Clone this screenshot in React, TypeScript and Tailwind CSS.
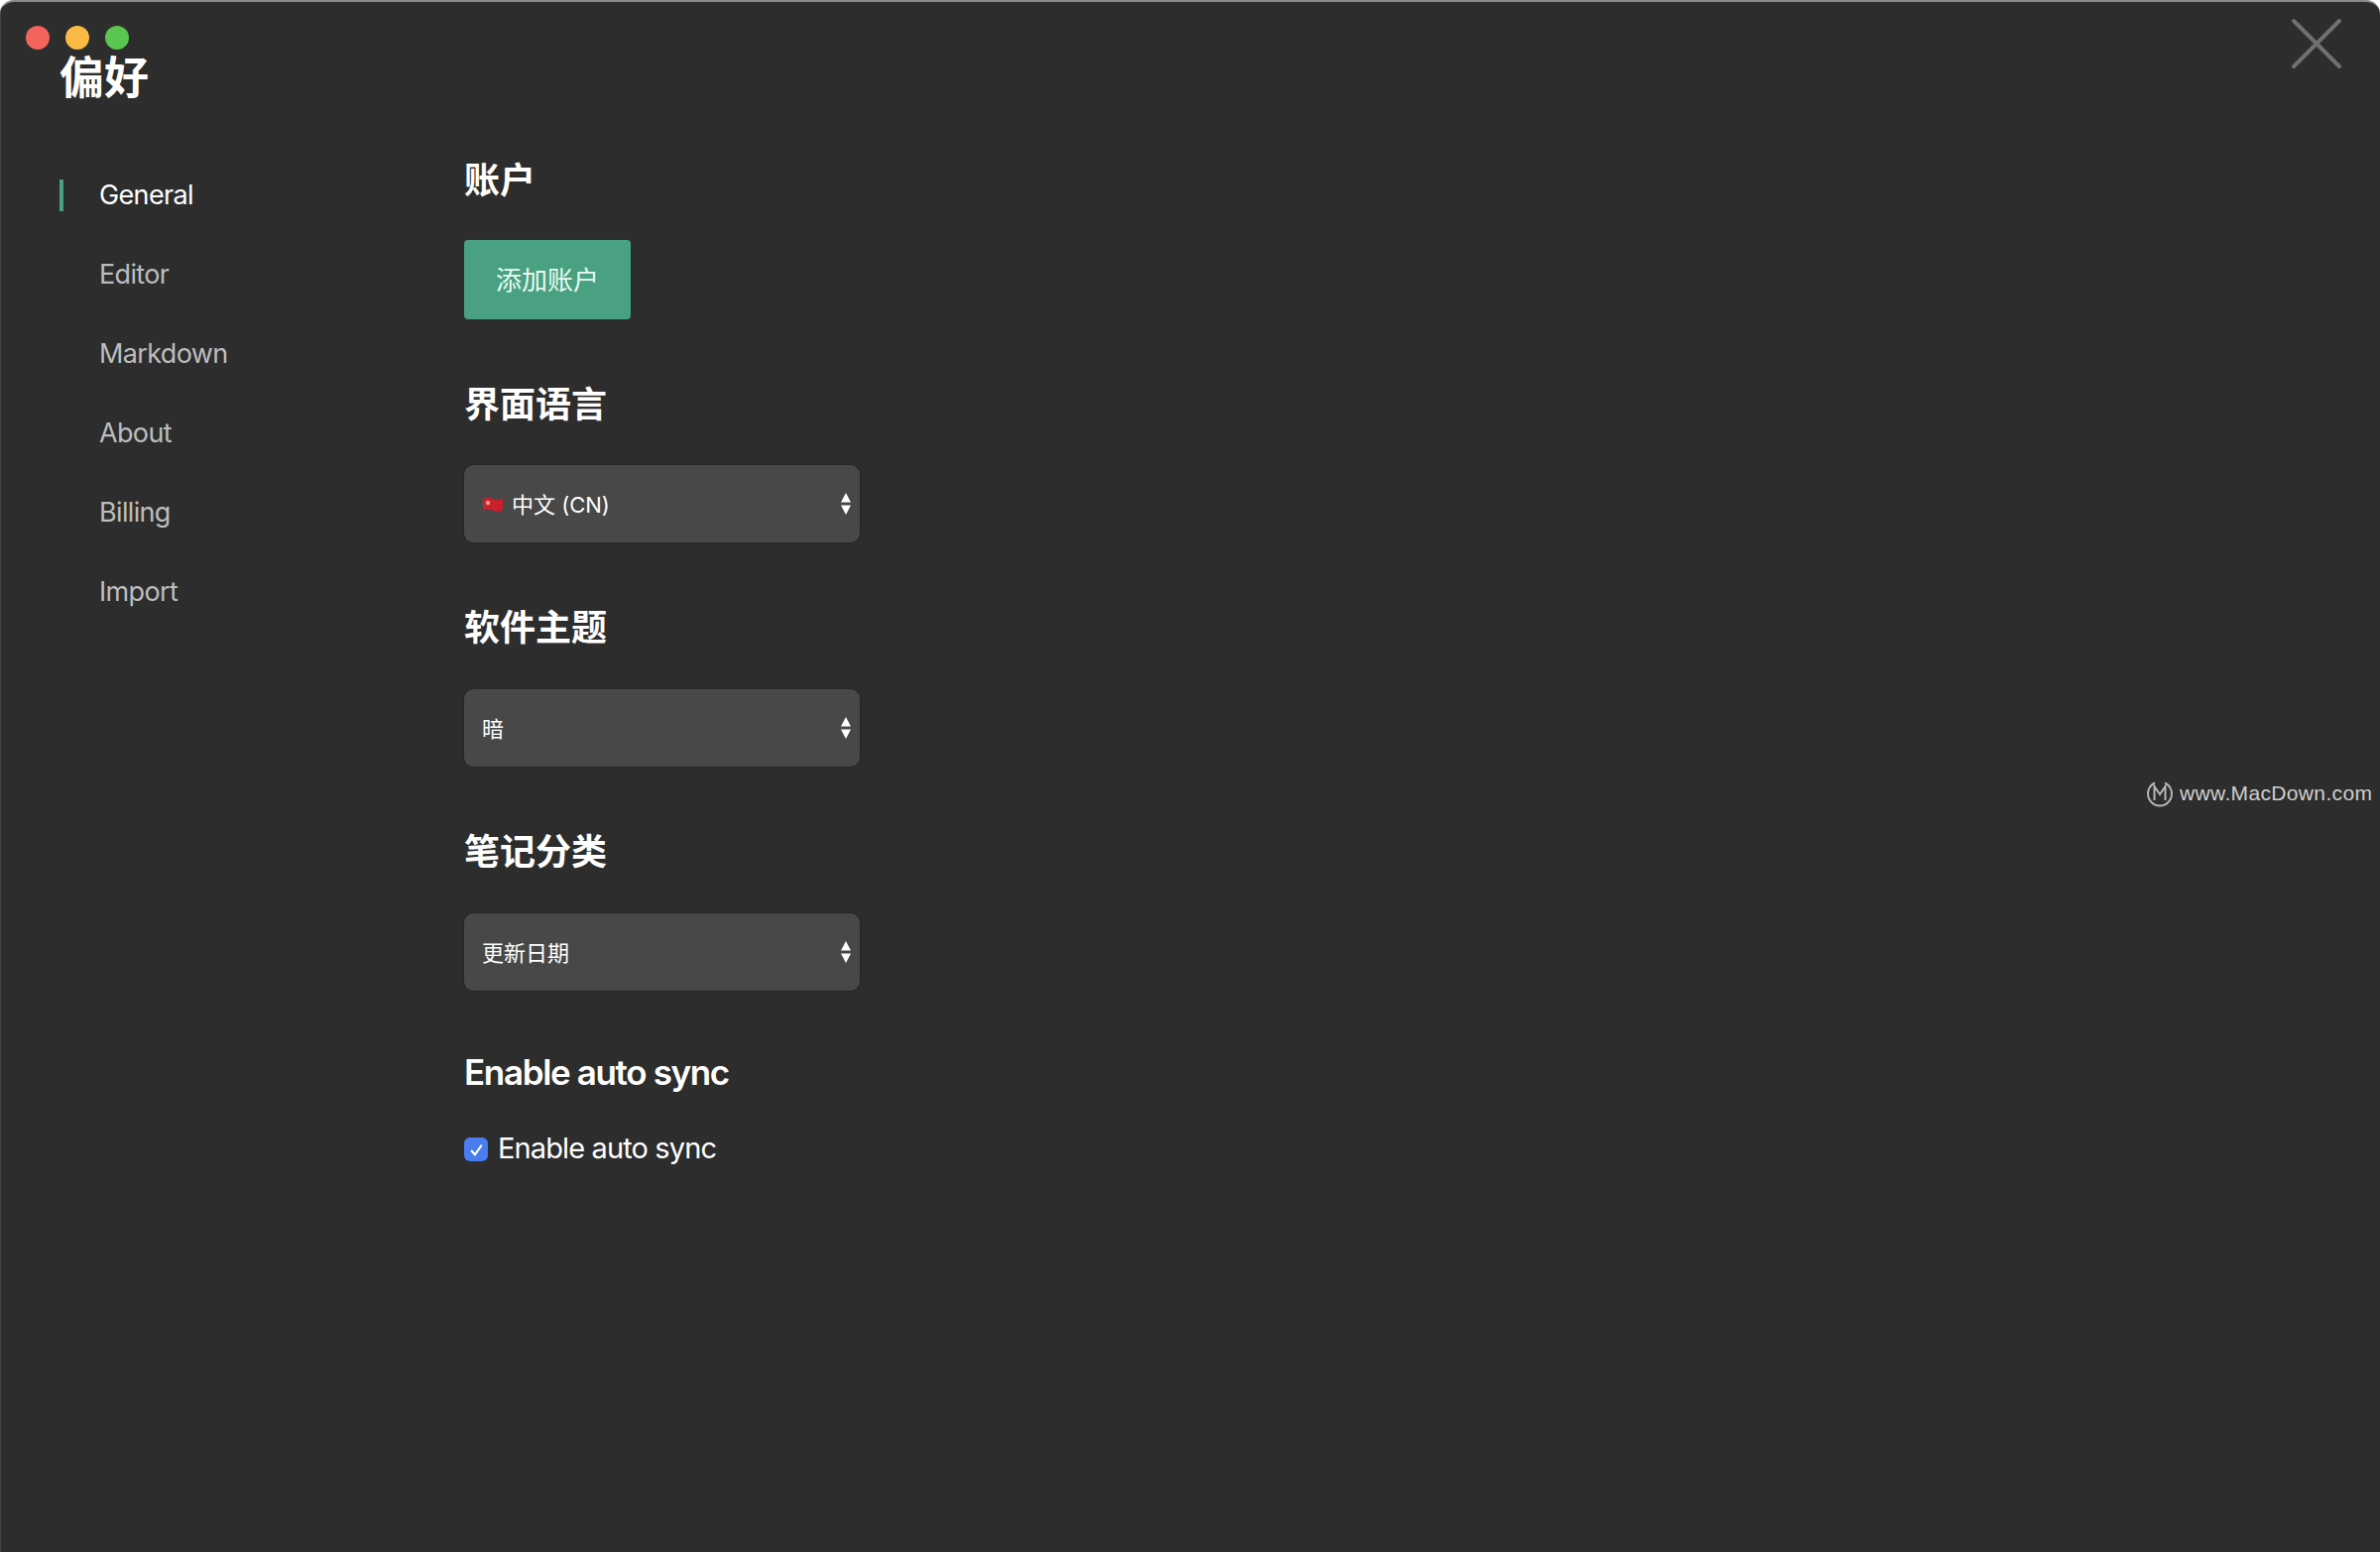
const cjk = "font-['Inter','Noto_Sans_CJK_SC',sans-serif]";

function Arrows() {
  return (
    <svg width="12" height="24" viewBox="0 0 12 24" className="absolute right-[8px] top-1/2 -translate-y-1/2">
      <path d="M6 1 L11 10.5 L1 10.5 Z M6 23 L11 13.5 L1 13.5 Z" fill="#ffffff" />
    </svg>
  );
}

function Flag() {
  return (
    <svg width="22" height="18" viewBox="0 0 22 18" className="mr-[8px] shrink-0">
      <path d="M1 3 Q6 0 11 3 T21 2 V14 Q16 18 11 15 T1 15 Z" fill="#c9202a" />
      <circle cx="6" cy="7" r="2.2" fill="#e89a8a" />
    </svg>
  );
}

function Select({ children }: { children: React.ReactNode }) {
  return (
    <div className="relative flex h-[78px] w-[399px] items-center rounded-[9px] bg-[#484848] pt-[2px] pl-[18px] text-[22px] text-white shadow-[0_0_2px_rgba(0,0,0,0.5)]">
      {children}
      <Arrows />
    </div>
  );
}

function Heading({ children, className = "" }: { children: React.ReactNode; className?: string }) {
  return <h2 className={`text-[36px] leading-[50px] font-bold text-white ${className}`}>{children}</h2>;
}

export default function App() {
  const items = ["General", "Editor", "Markdown", "About", "Billing", "Import"];
  return (
    <div className={`relative h-[1565px] w-[2400px] overflow-hidden rounded-t-[14px] border-t-2 border-l border-[#8a8a8a] border-l-[#444444] bg-[#2d2d2d] ${cjk}`}>
      <div className="absolute left-[25px] top-[24px] flex gap-[16px]">
        <span className="h-[24px] w-[24px] rounded-full bg-[#f2645c]" />
        <span className="h-[24px] w-[24px] rounded-full bg-[#f9bb45]" />
        <span className="h-[24px] w-[24px] rounded-full bg-[#5ac650]" />
      </div>

      <svg width="52" height="52" viewBox="0 0 52 52" className="absolute left-[2309px] top-[16px]">
        <path d="M3 3 L49 49 M49 3 L3 49" stroke="#707070" strokeWidth="4" strokeLinecap="round" />
      </svg>

      <div className="absolute left-[2162px] top-[783px] flex items-center gap-[5px] text-[#cfcfcf]">
        <svg width="30" height="30" viewBox="0 0 30 30">
          <path d="M10 4.5 A12 12 0 1 0 20 4.5" fill="none" stroke="#b5b5b5" strokeWidth="2" />
          <path d="M9.5 22 V8 L15 16 L20.5 8 V22" fill="none" stroke="#b5b5b5" strokeWidth="2" />
        </svg>
        <span className="font-['Liberation_Sans',sans-serif] text-[21px] leading-[30px] tracking-[0.35px]">www.MacDown.com</span>
      </div>

      <div className="flex h-full">
        <aside className="w-[467px] shrink-0 pl-[59px]">
          <h1 className="mt-[49px] h-[56px] text-[45px] leading-[56px] font-bold text-white">偏好</h1>
          <nav className="mt-[50px] flex flex-col">
            {items.map((item, i) => (
              <div key={item} className="flex h-[80px] items-center">
                <span className={`h-[32px] w-[4px] ${i === 0 ? "bg-[#4aa181]" : ""}`} />
                <span className={`ml-[36px] text-[27px] tracking-[-0.65px] ${i === 0 ? "text-white" : "text-[#bdbdbd]"}`}>{item}</span>
              </div>
            ))}
          </nav>
        </aside>

        <main className="flex-1 pt-[155px]">
          <Heading>账户</Heading>
          <button className="mt-[35px] block h-[80px] w-[168px] rounded-[4px] bg-[#4aa181] text-[26px] text-[#e8fbf3]">添加账户</button>

          <Heading className="mt-[61px]">界面语言</Heading>
          <div className="mt-[36px]">
            <Select>
              <Flag />
              中文 (CN)
            </Select>
          </div>

          <Heading className="mt-[61px]">软件主题</Heading>
          <div className="mt-[37px]">
            <Select>暗</Select>
          </div>

          <Heading className="mt-[61px]">笔记分类</Heading>
          <div className="mt-[37px]">
            <Select>更新日期</Select>
          </div>

          <h2 className="mt-[57px] text-[35px] leading-[50px] font-semibold tracking-[-1.35px] text-white">Enable auto sync</h2>
          <label className="mt-[28px] flex h-[48px] items-center gap-[10px] text-[29px] tracking-[-0.88px] text-white">
            <span className="mt-[2px] flex h-[24px] w-[24px] items-center justify-center rounded-[6px] bg-[#4a7df0]">
              <svg width="17" height="17" viewBox="0 0 16 16">
                <path d="M3 8.5 L6.5 12.5 L13 3.5" fill="none" stroke="#ffffff" strokeWidth="2" />
              </svg>
            </span>
            Enable auto sync
          </label>
        </main>
      </div>
    </div>
  );
}
